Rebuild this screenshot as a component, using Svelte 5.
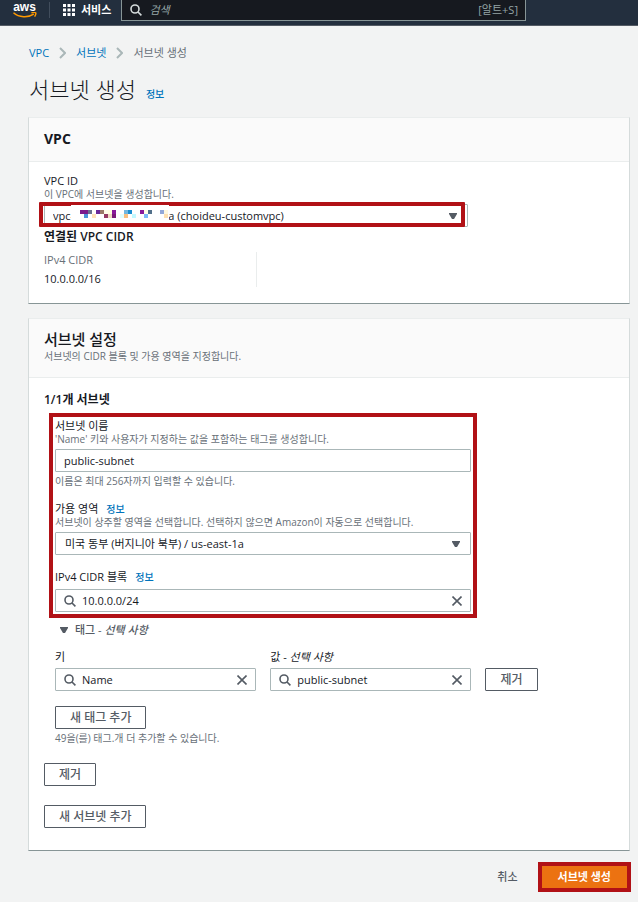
<script lang="ts">
  interface Tile {
    col: number;
    row: number;
    fill: string;
  }

  const MASK_LENGTH = 33;
  const nbsp = '\u00a0';

  let vpcLabel = `vpc-${nbsp.repeat(MASK_LENGTH)}a (choideu-customvpc)`;
  let name = $state('public-subnet');
  let zone = $state('us-east-1a');
  let cidr = $state('10.0.0.0/24');
  let tagKey = $state('Name');
  let tagValue = $state('public-subnet');
  let query = $state('');
  let tagsOpen = $state(true);

  // mosaic that hides the middle of the VPC id
  const rows: [number, string][][] = [
    [
      [0, '#7b1a8c'], [1, '#7b1a8c'], [2, '#6b7090'], [4, '#6a2a9a'], [5, '#9a7a68'],
      [6, '#fffde8'], [7, '#ffffe0'], [8, '#8a1a9a'], [11, '#72b8e0'], [12, '#1a8ed0'],
      [15, '#8a1a9a'], [16, '#ffffe8'], [17, '#52708a'], [20, '#94a8d8'], [21, '#fff8e0'],
    ],
    [
      [1, '#4a92d8'], [3, '#ffe2b8'], [6, '#963a62'], [7, '#eedcc0'], [8, '#7a1a7a'],
      [10, '#e0ffff'], [11, '#f8c080'], [13, '#c0f8ff'], [16, '#7ab8f8'], [21, '#ffe0b0'],
    ],
  ];
  const tiles: Tile[] = rows.flatMap((cells, row) => cells.map(([col, fill]) => ({ col, row, fill })));
</script>

{#snippet magnifier()}
  <svg class="magnifier" viewBox="0 0 12 12" width="12" height="12" aria-hidden="true">
    <circle cx="5" cy="5" r="4" />
    <path d="M8 8l3.4 3.4" />
  </svg>
{/snippet}

{#snippet cross()}
  <svg viewBox="0 0 10 10" width="10" height="10" aria-hidden="true">
    <path d="M0.5 0.5l9 9M9.5 0.5l-9 9" />
  </svg>
{/snippet}

{#snippet chevron()}
  <svg class="chevron" viewBox="0 0 7 12" width="7" height="12" aria-hidden="true">
    <path d="M1 1l5 5-5 5" />
  </svg>
{/snippet}

{#snippet arrow()}
  <svg class="arrow" viewBox="0 0 8 6" width="8" height="6" aria-hidden="true">
    <path d="M0 0h8v1L5 6H3L0 1z" />
  </svg>
{/snippet}

<header class="topbar">
  <a class="logo" href="#home">
    <span>aws</span>
    <svg viewBox="0 0 24 6" width="24" height="6" aria-hidden="true">
      <path d="M0.5 0.8C6 5.6 15 6 20.8 2.2" />
      <path d="M18.4 0.9c2-.6 3.6-.7 4.2-.1.5.6 0 2.3-1 3.8" />
    </svg>
  </a>
  <button class="services">
    <svg viewBox="0 0 12 12" width="12" height="12" aria-hidden="true">
      {#each [0, 1, 2] as r}
        {#each [0, 1, 2] as c}
          <rect x={c * 4.5} y={r * 4.5} width="3" height="3" />
        {/each}
      {/each}
    </svg>
    서비스
  </button>
  <div class="search">
    {@render magnifier()}
    <input type="text" placeholder="검색" aria-label="검색" bind:value={query} />
    <span class="keys">[알트+S]</span>
  </div>
</header>

<main>
  <nav class="breadcrumbs">
    <a href="#vpc">VPC</a>
    {@render chevron()}
    <a href="#subnets">서브넷</a>
    {@render chevron()}
    <span>서브넷 생성</span>
  </nav>

  <div class="title">
    <h1>서브넷 생성</h1>
    <a class="info" href="#info">정보</a>
  </div>

  <section class="card">
    <div class="card-header">
      <h2>VPC</h2>
    </div>
    <div class="card-body vpc-body">
      <label for="vpc">VPC ID</label>
      <p class="desc">이 VPC에 서브넷을 생성합니다.</p>
      <div class="select vpc-select">
        <select id="vpc">
          <option>{vpcLabel}</option>
        </select>
        {@render arrow()}
        <span class="vpc-mark"></span>
        <svg class="mosaic" viewBox="0 0 98 18" width="98" height="18" aria-hidden="true">
          <rect width="98" height="18" fill="#fff" />
          {#each tiles as t}
            <rect x={9 + t.col * 4} y={5 + t.row * 4} width="4" height="4" fill={t.fill} />
          {/each}
        </svg>
      </div>
      <h3>연결된 VPC CIDR</h3>
      <dl>
        <dt>IPv4 CIDR</dt>
        <dd>10.0.0.0/16</dd>
      </dl>
    </div>
  </section>

  <section class="card">
    <div class="card-header tall">
      <h2 class="medium">서브넷 설정</h2>
      <p class="desc">서브넷의 CIDR 블록 및 가용 영역을 지정합니다.</p>
    </div>
    <div class="card-body">
      <h3>1/1개 서브넷</h3>
      <div class="subnet">
        <div class="marked">
          <div class="field">
            <label for="name">서브넷 이름</label>
            <p class="desc">'Name' 키와 사용자가 지정하는 값을 포함하는 태그를 생성합니다.</p>
            <div class="box">
              <input id="name" type="text" bind:value={name} />
            </div>
            <p class="desc hint">이름은 최대 256자까지 입력할 수 있습니다.</p>
          </div>

          <div class="field">
            <div class="label-row">
              <label for="zone">가용 영역</label>
              <a class="info" href="#zone-info">정보</a>
            </div>
            <p class="desc">서브넷이 상주할 영역을 선택합니다. 선택하지 않으면 Amazon이 자동으로 선택합니다.</p>
            <div class="select">
              <select id="zone" bind:value={zone}>
                <option value="us-east-1a">미국 동부 (버지니아 북부) / us-east-1a</option>
              </select>
              {@render arrow()}
            </div>
          </div>

          <div class="field">
            <div class="label-row spaced">
              <label for="cidr">IPv4 CIDR 블록</label>
              <a class="info" href="#cidr-info">정보</a>
            </div>
            <div class="box">
              {@render magnifier()}
              <input id="cidr" type="text" bind:value={cidr} />
              <button class="clear" aria-label="지우기" onclick={() => (cidr = '')}>{@render cross()}</button>
            </div>
          </div>
        </div>

        <button class="expander" aria-expanded={tagsOpen} onclick={() => (tagsOpen = !tagsOpen)}>
          {@render arrow()}
          <span>태그 - <i>선택 사항</i></span>
        </button>

        {#if tagsOpen}
          <div class="tags">
            <div>
              <label for="key">키</label>
              <div class="box">
                {@render magnifier()}
                <input id="key" type="text" bind:value={tagKey} />
                <button class="clear" aria-label="지우기" onclick={() => (tagKey = '')}>{@render cross()}</button>
              </div>
            </div>
            <div>
              <label for="value">값 - <i>선택 사항</i></label>
              <div class="box">
                {@render magnifier()}
                <input id="value" type="text" bind:value={tagValue} />
                <button class="clear" aria-label="지우기" onclick={() => (tagValue = '')}>{@render cross()}</button>
              </div>
            </div>
            <button class="btn">제거</button>
          </div>
          <button class="btn">새 태그 추가</button>
          <p class="desc hint">49을(를) 태그.개 더 추가할 수 있습니다.</p>
        {/if}
      </div>
      <div class="card-actions">
        <button class="btn">제거</button>
        <button class="btn">새 서브넷 추가</button>
      </div>
    </div>
  </section>

  <footer>
    <button class="cancel">취소</button>
    <button class="primary">서브넷 생성</button>
  </footer>
</main>

<style>
  :global(body) {
    background: #f2f3f3;
    color: #16191f;
    font: 11px/16px 'Open Sans', 'Noto Sans CJK KR', sans-serif;
  }

  h1,
  h2,
  h3,
  p,
  dl,
  dd {
    margin: 0;
  }

  a {
    color: #0073bb;
    text-decoration: none;
  }

  button,
  input,
  select {
    font: inherit;
    color: inherit;
    margin: 0;
    padding: 0;
    border: 0;
    border-radius: 0;
    background: none;
    box-sizing: border-box;
  }

  button {
    cursor: pointer;
  }

  svg {
    flex-shrink: 0;
    fill: none;
    stroke: #545b64;
    stroke-width: 1.6;
  }

  .topbar {
    display: flex;
    align-items: flex-start;
    height: 25px;
    background: #232f3e;
    border-bottom: 1px solid #545b64;
    color: #fff;
  }

  .logo {
    display: flex;
    flex-direction: column;
    align-items: center;
    width: 49px;
    color: #fff;
    font-family: 'Liberation Sans', sans-serif;
    font-size: 12px;
    font-weight: 700;
    line-height: 14px;
  }

  .logo svg {
    margin-top: -2px;
    stroke: #f90;
    stroke-width: 1.5;
  }

  .services {
    display: flex;
    align-items: center;
    gap: 6px;
    height: 16px;
    margin: 2px 0;
    padding: 0 10px 0 13px;
    border-left: 1px solid #414d5c;
    font-weight: 700;
  }

  .services svg {
    fill: #fff;
    stroke: none;
  }

  .search {
    display: flex;
    align-items: center;
    flex: 1;
    min-width: 0;
    height: 20px;
    margin-right: 112px;
    padding: 0 7px 0 8px;
    background: #16191f;
    border: 1px solid #879596;
    border-top: 0;
  }

  .search svg {
    stroke: #d5dbdb;
  }

  .search input {
    flex: 1;
    min-width: 0;
    margin-left: 7px;
    outline: 0;
  }

  .search input::placeholder {
    color: #95a5a6;
    font-style: italic;
  }

  .keys {
    color: #95a5a6;
  }

  main {
    padding: 19px 8px 10px 28px;
  }

  .breadcrumbs {
    display: flex;
    align-items: center;
    gap: 10px;
    padding-left: 1px;
    color: #687078;
  }

  .chevron {
    stroke: #aab7b8;
    stroke-width: 2;
  }

  .title {
    display: flex;
    align-items: baseline;
    gap: 10px;
    margin: 12px 0;
    padding-left: 1px;
  }

  h1 {
    font-size: 22px;
    font-weight: 300;
    line-height: 32px;
  }

  .info {
    font-size: 10px;
    line-height: 12px;
    font-weight: 500;
  }

  .card {
    margin-bottom: 14px;
    background: #fff;
    border: 1px solid #d5dbdb;
    border-top-color: #eaeded;
    border-bottom-color: #879596;
  }

  .card-header {
    padding: 11px 15px 12px;
    background: #fafafa;
    border-bottom: 1px solid #eaeded;
  }

  .card-header.tall {
    padding: 10px 15px 15px;
  }

  h2 {
    font-size: 14px;
    font-weight: 700;
    line-height: 20px;
  }

  .medium {
    font-size: 15px;
    font-weight: 500;
    line-height: 21px;
  }

  .card-body {
    padding: 13px 15px 22px;
  }

  .vpc-body {
    padding: 12px 15px 16px;
  }

  .desc {
    color: #687078;
    font-size: 10px;
    line-height: 12px;
  }

  .hint {
    margin-top: 3px;
  }

  label {
    display: block;
    line-height: 14px;
  }

  h3 {
    font-size: 12px;
    font-weight: 600;
    line-height: 18px;
  }

  .box,
  .select {
    display: flex;
    align-items: center;
    box-sizing: border-box;
    height: 23px;
    border: 1px solid #aab7b8;
    border-radius: 1px;
    background: #fff;
  }

  .box {
    padding: 0 8px;
  }

  .box input {
    flex: 1;
    min-width: 0;
    outline: 0;
  }

  .box .magnifier + input {
    margin-left: 6px;
  }

  .clear {
    display: flex;
  }

  .select {
    position: relative;
  }

  select {
    appearance: none;
    width: 100%;
    height: 21px;
    padding: 0 24px 0 9px;
  }

  .arrow {
    fill: #545b64;
    stroke: none;
  }

  .select .arrow {
    position: absolute;
    right: 10px;
    pointer-events: none;
  }

  .vpc-select {
    width: calc(72% + 14px);
    margin: 4px 0 1px;
  }

  .vpc-select select {
    padding-left: 8px;
  }

  .vpc-mark {
    position: absolute;
    inset: -3px 2px -1px -6px;
    border: 4px solid #b11116;
    border-radius: 1px;
    pointer-events: none;
  }

  .mosaic {
    position: absolute;
    left: 26px;
    top: 0;
    stroke: none;
    pointer-events: none;
  }

  dl {
    width: 212px;
    margin-top: 6px;
    border-right: 1px solid #eaeded;
  }

  dt {
    color: #687078;
  }

  dd {
    margin-top: 3px;
    color: #16191f;
  }

  .subnet {
    padding-left: 11px;
  }

  .marked {
    width: calc(72% + 14px);
    margin-top: 10px;
    outline: 4px solid #b11116;
    outline-offset: 2px;
  }

  .field + .field {
    padding-top: 15px;
  }

  .desc + .box,
  .desc + .select {
    margin-top: 4px;
  }

  .label-row {
    display: flex;
    align-items: baseline;
    gap: 8px;
  }

  .spaced {
    margin-bottom: 5px;
  }

  .expander {
    display: flex;
    align-items: center;
    gap: 7px;
    margin: 10px 0 12px 5px;
    color: #545b64;
    font-weight: 500;
  }

  .tags {
    display: grid;
    grid-template-columns: 36% 36% max-content;
    gap: 14px;
    align-items: end;
    margin-bottom: 15px;
  }

  .tags label {
    margin-bottom: 4px;
  }

  .btn {
    height: 23px;
    padding: 0 14px;
    border: 1px solid #545b64;
    border-radius: 1px;
    background: #fff;
    color: #545b64;
    font-size: 12px;
    font-weight: 500;
    line-height: 18px;
  }

  .card-actions {
    display: flex;
    flex-direction: column;
    align-items: flex-start;
    gap: 19px;
    margin-top: 19px;
  }

  footer {
    display: flex;
    justify-content: flex-end;
    align-items: center;
    gap: 24px;
    padding: 1px 3px 0 0;
  }

  .cancel {
    color: #545b64;
    font-weight: 500;
  }

  .primary {
    height: 22px;
    padding: 0 16px;
    background: #ec7211;
    outline: 4px solid #b11116;
    color: #fff;
    font-weight: 700;
  }
</style>
